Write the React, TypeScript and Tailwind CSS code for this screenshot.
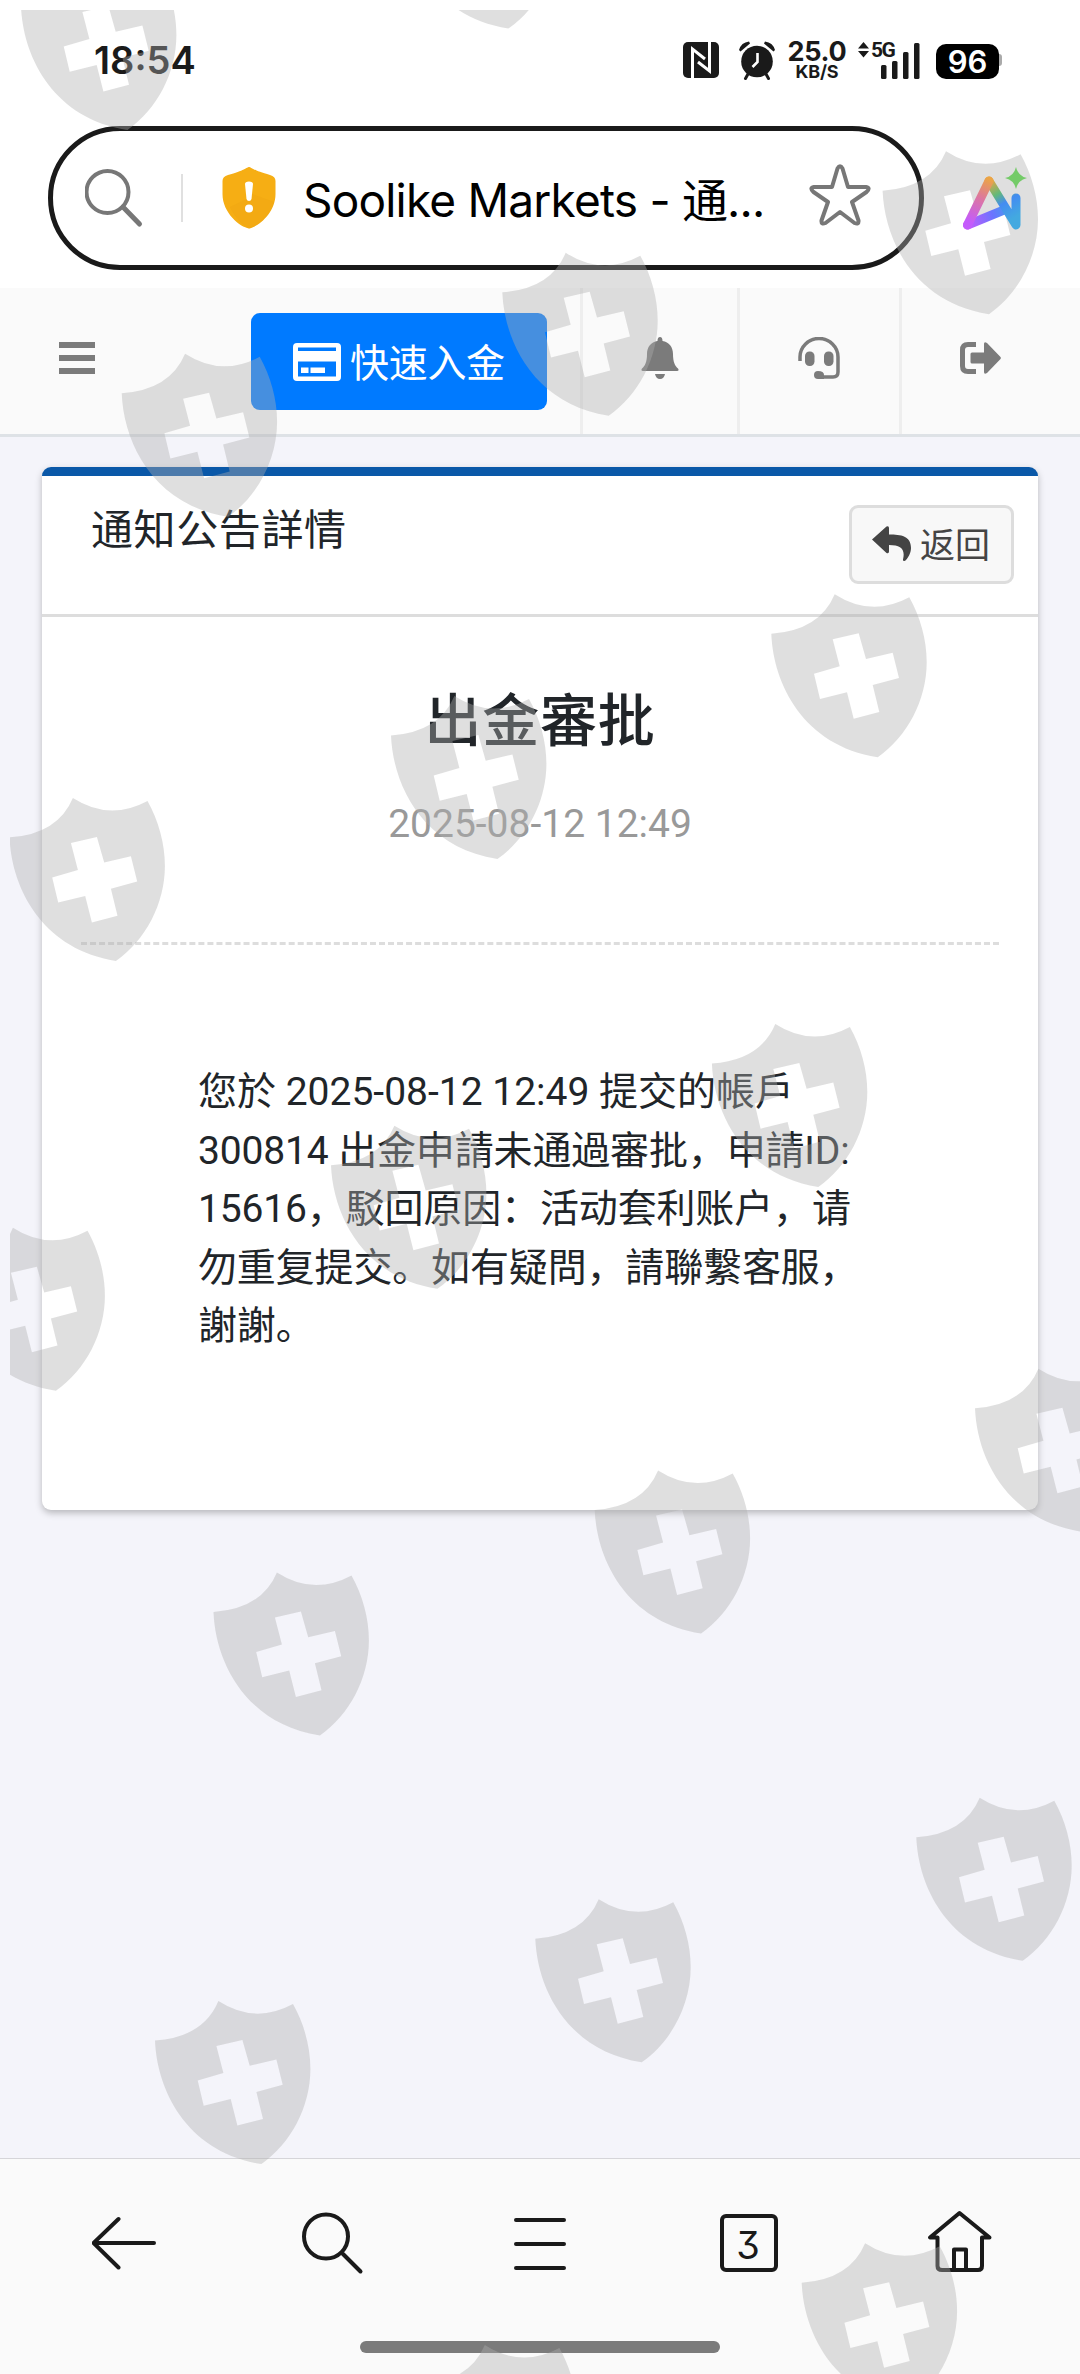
const shields = [
  [21, 6.5], [402, -95],
  [121.7, 393.3], [502.3, 292.3], [882.6, 190.7],
  [9.5, 837.4], [391, 735.5], [771.3, 633.8],
  [-50.5, 1267.3], [331, 1165.3], [711.9, 1063.5],
  [213.5, 1612], [594.7, 1510], [975, 1408.2],
  [155, 2040.6], [535.3, 1938.8], [916.3, 1837.2],
  [801.7, 2282.7], [421.4, 2384.5],
];

const Watermark = () => {
  return (
    <svg className="absolute top-[10px] left-[10px] pointer-events-none" width="1070" height="2364" viewBox="10 10 1070 2364" fill="#afafaf" fillOpacity="0.4">
      {shields.map(([x, y]) => (
        <path
          key={`${x}-${y}`}
          transform={`translate(${x} ${y})`}
          fillRule="evenodd"
          d="M0 0Q48.3 -3.3 63.4 -39.5Q100 -16 138 -36.5C149 -17 155.4 6 155.4 28.5C155.4 66 136 103 106.4 123.5C32 112 2 50 0 0ZM61.4 5.5L68.4 32.5L42.7 40L48.7 65.2L75.7 58.5L82.4 85L108 78.3L101.4 51.3L127.7 44.2L121.4 18.9L94.7 25.2L87.4 -.5Z"
        />
      ))}
    </svg>
  );
};

const StatusBar = () => {
  return (
    <div className="flex items-center h-[120px] pl-[94px] pr-[78px] text-[#1a1a1a] font-[Inter,sans-serif]">
      <span className="text-[38px] font-semibold leading-none">18:54</span>
      <div className="flex items-center ml-auto">
        <svg width="36" height="36" viewBox="0 0 36 36">
          <rect width="36" height="36" rx="5" fill="#1a1a1a" />
          <path d="M9.500 37V7L22 17M26.500 -1V29L15 20" fill="none" stroke="#fff" strokeWidth="3" />
        </svg>
        <svg className="ml-[20px]" width="36" height="39" viewBox="0 0 36 39">
          <circle cx="18" cy="20.5" r="15.8" fill="#1a1a1a" />
          <path d="M0 9A12 12 0 0 1 10 0.5L11 2.5L1.5 10.5ZM36 9A12 12 0 0 0 26 0.5L25 2.5L34.5 10.5Z" fill="#1a1a1a" />
          <path d="M9 33L6.5 37.5M27 33L29.5 37.5" stroke="#1a1a1a" strokeWidth="3" strokeLinecap="round" />
          <path d="M18.5 12V21L13.5 26" fill="none" stroke="#fff" strokeWidth="2.6" />
        </svg>
        <div className="flex flex-col items-center w-[58px] ml-[13px]">
          <span className="text-[27px] font-bold leading-[22px] tracking-[-0.3px]">25.0</span>
          <span className="text-[18px] font-bold leading-[17px] tracking-[-0.2px]">KB/S</span>
        </div>
        <div className="relative ml-[12px] w-[62px] h-[37px]">
          <svg width="62" height="37" viewBox="0 0 62 37" fill="#1a1a1a">
            <path d="M5.500 0L11 6.500H0ZM5.500 15.500L11 9H0Z" />
            <rect x="23" y="23" width="5.5" height="14" rx="1.5" />
            <rect x="34" y="19" width="5.5" height="18" rx="1.5" />
            <rect x="45" y="10" width="5.5" height="27" rx="1.5" />
            <rect x="56" y="1" width="5.5" height="36" rx="1.5" />
          </svg>
          <span className="absolute left-[13px] top-0 text-[21px] leading-[17px] font-bold font-[Roboto,sans-serif] tracking-[-1.5px]">5G</span>
        </div>
        <div className="flex items-center justify-center w-[63px] h-[35px] mt-[2px] ml-[16px] rounded-[10px] bg-black text-white text-[31px] font-semibold leading-none">96</div>
        <div className="w-[3px] h-[12px] bg-[#aaa] rounded-r-sm" />
      </div>
    </div>
  );
};

const AddressBar = () => {
  return (
    <div className="flex items-center h-[168px] pt-[6px] pb-[18px] pl-[48px]">
      <div className="flex items-center w-[876px] h-[144px] border-[5px] border-[#1a1a1a] rounded-full pl-[32px]">
        <svg width="59" height="59" viewBox="0 0 59 59" fill="none" stroke="#777" strokeWidth="4">
          <circle cx="22.5" cy="23" r="21" />
          <path d="M38 38L54.500 55" strokeLinecap="round" strokeWidth="5" />
        </svg>
        <div className="w-[2px] h-[48px] ml-[37px] bg-[#e0e0e0]" />
        <svg className="ml-[39px]" width="54" height="62" viewBox="0 0 54 62">
          <path d="M27 0C29 0 32 4 48 8Q53.500 9.500 53.500 14V27C53.500 46 36 60 27 61.500C18 60 .5 46 .5 27V14Q.5 9.500 6 8C22 4 25 0 27 0Z" fill="#f6ae14" />
          <path d="M27 31L8 40C13 51 22 59 27 61.500C36 59 48 49 52 35L27 26Z" fill="#f0a512" opacity=".5" />
          <path d="M23 17Q23 14.500 27 14.500T31 17L29.500 32Q29 34 27 34T24.500 32Z" fill="#fff" />
          <circle cx="27" cy="41.500" r="4" fill="#fff" />
        </svg>
        <span className="ml-[27px] mt-[3px] w-[470px] text-[46px] leading-none tracking-[-0.8px] text-black whitespace-nowrap font-[Inter,'Noto_Sans_CJK_SC',sans-serif]">Soolike Markets - 通...</span>
        <svg className="ml-[36px] -mt-[6px]" width="62" height="62" viewBox="0 0 62 62" fill="none" stroke="#777" strokeWidth="4" strokeLinejoin="round">
          <path d="M28.500 4.500Q31 0 33.500 4.500L39 23H57Q62 24 57.500 28L43 38L49.500 56.500Q50 61 45.500 59L31 48L16.500 59Q12 61 12.500 56.500L19 38L4.500 28Q0 24 5 23H23Z" />
        </svg>
      </div>
      {/* sits above the watermark */}
      <svg className="relative z-10 ml-[38px] mt-[3px]" width="66" height="66" viewBox="0 0 66 66" fill="none">
        <defs>
          <linearGradient id="ai" x1="5" y1="55" x2="60" y2="35" gradientUnits="userSpaceOnUse">
            <stop offset="0" stopColor="#c45bfb" />
            <stop offset=".45" stopColor="#6b74ff" />
            <stop offset=".8" stopColor="#3ea2ec" />
            <stop offset="1" stopColor="#4aa7cc" />
          </linearGradient>
          <linearGradient id="peak" x1="8" y1="55" x2="28" y2="12" gradientUnits="userSpaceOnUse">
            <stop offset="0" stopColor="#c45bfb" />
            <stop offset=".55" stopColor="#dc76a0" />
            <stop offset="1" stopColor="#eba545" />
          </linearGradient>
          <linearGradient id="side" x1="27" y1="14" x2="50" y2="52" gradientUnits="userSpaceOnUse">
            <stop offset="0" stopColor="#eba545" />
            <stop offset=".35" stopColor="#63b978" />
            <stop offset=".6" stopColor="#438cf2" />
            <stop offset="1" stopColor="#43a9e0" />
          </linearGradient>
        </defs>
        <g strokeWidth="9" strokeLinecap="round" strokeLinejoin="round">
          <path d="M5.500 58L42 43" stroke="url(#ai)" />
          <path d="M27 14L54 58V31" stroke="url(#side)" />
          <path d="M5.500 58L27 14" stroke="url(#peak)" />
        </g>
        <path d="M54 0Q56 9 65 11Q56 13 54 22Q52 13 43 11Q52 9 54 0Z" fill="#74cb68" />
      </svg>
    </div>
  );
};

const Toolbar = () => {
  return (
    <div className="flex h-[149px] bg-[#fafafa] border-b-[3px] border-[#dee2e6]">
      <svg className="ml-[59px] mt-[54px]" width="36" height="32" viewBox="0 0 36 32" fill="#7b7b7b">
        <path d="M0 0H36V6H0ZM0 13H36V19H0ZM0 26H36V32H0Z" />
      </svg>
      <button className="flex items-center ml-[156px] mt-[25px] w-[296px] h-[97px] rounded-[9px] bg-[#007aff] pl-[42px] text-white text-[39px] leading-none whitespace-nowrap">
        <svg width="48" height="38" viewBox="0 0 48 38">
          <path fill="#fff" fillRule="evenodd" d="M4 0H44Q48 0 48 4V34Q48 38 44 38H4Q0 38 0 34V4Q0 0 4 0ZM5 4.500V8H43V4.500ZM5 18.500V33.500H43V18.500Z" />
          <path d="M8 24.500H15.500V30H8ZM17.500 24.500H32V30H17.500Z" fill="#fff" />
        </svg>
        <span className="ml-[9px] pt-[6px] tracking-[-0.3px]">快速入金</span>
      </button>
      <div className="flex items-start justify-center ml-[33px] w-[157px] border-l-[3px] border-[#eee] pt-[49px]">
        <svg width="38" height="42" viewBox="0 0 38 42" fill="#7b7b7b">
          <path d="M19 0Q21.500 0 21.500 4C28 5 32 10 32 17C32 25 34 29 37 31.500Q38.500 34 36 34H2Q-.5 34 1 31.500C4 29 6 25 6 17C6 10 10 5 16.500 4Q16.500 0 19 0ZM14 37H24Q23 42 19 42T14 37Z" />
        </svg>
      </div>
      <div className="flex items-start justify-center w-[162px] border-l-[3px] border-[#eee] pt-[49px] pr-[2px]">
        <svg width="42" height="42" viewBox="0 0 42 42" fill="#7b7b7b">
          <path d="M2 24V20A19 18.500 0 0 1 40 20V35Q40 40 35 40H20" fill="none" stroke="#7b7b7b" strokeWidth="3.500" />
          <rect x="7" y="14.5" width="9.5" height="14.5" rx="4.5" />
          <rect x="26" y="14.5" width="9.5" height="14.5" rx="4.5" />
          <path d="M20 34Q26 34 26 38V42H20A4 4 0 0 1 20 34Z" />
        </svg>
      </div>
      <div className="flex items-start w-[181px] border-l-[3px] border-[#eee] pt-[54px] pl-[58px]">
        <svg width="41" height="32" viewBox="0 0 41 32" fill="#7b7b7b">
          <path d="M16 2.500H8Q2.500 2.500 2.500 8V24Q2.500 29.500 8 29.500H16" fill="none" stroke="#7b7b7b" strokeWidth="5" />
          <path d="M12 10.500H24V2Q24 -1 27 1L40.500 15Q41.200 16 40.500 17L27 31Q24 33 24 30V21.500H12Q10.500 21.500 10.500 20V12Q10.500 10.500 12 10.500Z" />
        </svg>
      </div>
    </div>
  );
};

const NoticeCard = () => {
  return (
    <div className="mx-[42px] mt-[30px] h-[1043px] bg-white rounded-[9px] border-t-[9px] border-[#0a58a8] shadow-[0_3px_7px_rgba(0,0,0,0.25)]">
      <div className="flex justify-between h-[141px] border-b-[3px] border-[#ddd] pl-[49px] pr-[24px]">
        <h1 className="mt-[31px] text-[42px] leading-[48px] tracking-[0.6px] text-[#212529]">通知公告詳情</h1>
        <button className="flex items-center mt-[29px] w-[165px] h-[79px] bg-[#f8f8f8] border-[3px] border-[#ddd] rounded-[9px] pl-[20px] text-[35px] text-[#444] leading-none whitespace-nowrap">
          <svg className="-mt-[2px]" width="39" height="35" viewBox="0 0 39 35" fill="#444">
            <path d="M0 13.500L14.500 .5Q17 -.5 17 2V8.500C29 8.500 39 10 39 22C39 27 36 32 33.500 34.500Q31 36 31 33.500C33.500 23 29 19 17 19V25.500Q17 28 14.500 27Z" />
          </svg>
          <span className="ml-[9px] pt-[3px]">返回</span>
        </button>
      </div>
      <div className="px-[39px]">
        <h2 className="pt-[73px] text-center text-[57px] leading-[64px] tracking-[0.7px] font-medium text-[#212529]">出金審批</h2>
        <p className="mt-[40px] text-center text-[39px] leading-[60px] text-[#999]">2025-08-12 12:49</p>
        <div className="mt-[88px] border-t-[3px] border-dashed border-[#ddd]" />
        <div className="mt-[118px] px-[117px] text-[39px] leading-[58.5px] tracking-[-0.15px] text-[#212529] whitespace-nowrap">
          <span className="tracking-normal">您於 2025-08-12 12:49 提交的帳戶</span>
          <br />
          300814 出金申請未通過審批，申請ID:
          <br />
          15616，駁回原因：活动套利账户，请
          <br />
          勿重复提交。如有疑問，請聯繫客服，
          <br />
          謝謝。
        </div>
      </div>
    </div>
  );
};

const BottomNav = () => {
  return (
    <div className="flex flex-col items-center mt-auto h-[216px] bg-[#fafafa] border-t border-[#d5d5d9]">
      <div className="flex justify-between w-full pt-[52px] px-[92px]">
        <svg width="64" height="64" viewBox="0 0 64 64" fill="none" stroke="#1a1a1a" strokeWidth="4" strokeLinecap="round">
          <path d="M26.500 8L1.500 32L26.500 56.500M3 32H62" />
        </svg>
        <svg width="64" height="64" viewBox="0 0 64 64" fill="none" stroke="#1a1a1a" strokeWidth="4" strokeLinecap="round">
          <circle cx="26" cy="25.500" r="22" />
          <path d="M43 43L60.500 60.500" />
        </svg>
        <svg width="64" height="64" viewBox="0 0 64 64" fill="none" stroke="#1a1a1a" strokeWidth="4" strokeLinecap="round">
          <path d="M8 9H56M8 33H56M8 57H56" />
        </svg>
        <div className="flex items-center justify-center w-[58px] h-[58px] mt-[3px] ml-[4px] mr-[2px] pt-[3px] pr-[2px] border-4 border-[#1a1a1a] rounded-[6px] text-[38px] leading-none text-[#1a1a1a] font-[Inter,sans-serif] [font-feature-settings:'cv09']">3</div>
        <svg className="overflow-visible" width="64" height="64" viewBox="-4 0 64 64" fill="none" stroke="#1a1a1a" strokeWidth="4" strokeLinejoin="round" strokeLinecap="round">
          <path d="M31.500 2L2 26.500H9.500V55Q9.500 59 14 59H50Q54 59 54 55V26.500H61.500ZM26 58V38.500H38V58" />
        </svg>
      </div>
      <div className="mt-[66px] w-[360px] h-[12px] rounded-full bg-[#7b7b7b]" />
    </div>
  );
};

const App = () => {
  return (
    <div className="relative flex flex-col w-[1080px] h-[2374px] overflow-hidden bg-[#f4f4fa] font-[Roboto,'Noto_Sans_CJK_SC',sans-serif]">
      <div className="bg-white">
        <StatusBar />
        <AddressBar />
      </div>
      <Toolbar />
      <NoticeCard />
      <BottomNav />
      <Watermark />
    </div>
  );
};

export default App;
